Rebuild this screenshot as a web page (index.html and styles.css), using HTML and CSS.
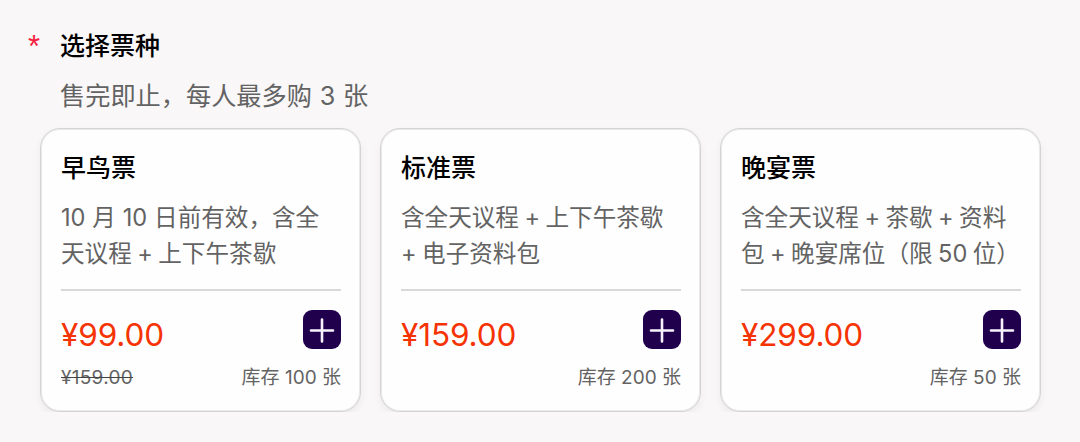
FILE: index.html
```html
<!DOCTYPE html>
<html lang="zh-CN">
<head>
    <meta charset="UTF-8">
    <meta name="viewport" content="width=device-width, initial-scale=1.0">
    <title>选择票种</title>
    <link rel="stylesheet" href="styles.css">
</head>
<body>
    <div class="field">
        <div class="field-title"><span class="required">*</span><h2>选择票种</h2></div>
        <p class="field-tip">售完即止，每人最多购 3 张</p>

        <div class="tickets">
            <div class="ticket">
                <h3>早鸟票</h3>
                <p class="desc"><span class="date">10 月 10 日前有效，含全</span><br>天议程 + 上下午茶歇</p>
                <div class="buy">
                    <span class="price">¥99.00</span>
                    <button class="add" aria-label="+">
                        <svg viewBox="0 0 38 38"><path d="M19 8.5v22M8 19.5h22"/></svg>
                    </button>
                </div>
                <div class="meta">
                    <del>¥159.00</del>
                    <span class="stock">库存 100 张</span>
                </div>
            </div>

            <div class="ticket">
                <h3>标准票</h3>
                <p class="desc">含全天议程 + 上下午茶歇<br>+ 电子资料包</p>
                <div class="buy">
                    <span class="price">¥159.00</span>
                    <button class="add" aria-label="+">
                        <svg viewBox="0 0 38 38"><path d="M19 8.5v22M8 19.5h22"/></svg>
                    </button>
                </div>
                <div class="meta">
                    <span class="stock">库存 200 张</span>
                </div>
            </div>

            <div class="ticket">
                <h3>晚宴票</h3>
                <p class="desc">含全天议程 + 茶歇 + 资料<br>包 + 晚宴席位（限 50 位）</p>
                <div class="buy">
                    <span class="price">¥299.00</span>
                    <button class="add" aria-label="+">
                        <svg viewBox="0 0 38 38"><path d="M19 8.5v22M8 19.5h22"/></svg>
                    </button>
                </div>
                <div class="meta">
                    <span class="stock">库存 50 张</span>
                </div>
            </div>
        </div>
    </div>
</body>
</html>
```
FILE: styles.css
```css
* {
    box-sizing: border-box;
}
body {
    margin: 0;
    background: #f9f7f8;
    color: #000;
    font-family: Inter, 'Noto Sans CJK SC', sans-serif;
}
h2, h3, p {
    margin: 0;
}
.field {
    padding: 28px 39px 0 40px;
}
.field-title {
    display: flex;
    height: 36px;
    line-height: 36px;
    margin-left: -12px;
}
.field-title h2 {
    font-size: 25px;
    font-weight: 500;
}
.required {
    width: 32px;
    color: #f5203c;
    font-family: 'Liberation Sans', sans-serif;
    font-size: 31px;
    line-height: 37px;
}
.field-tip {
    height: 64px;
    padding: 14px 0 0 20px;
    line-height: 36px;
    font-size: 25.2px;
    font-weight: 400;
    word-spacing: 0.7px;
    color: #636363;
}
.tickets {
    display: grid;
    grid-template-columns: repeat(3, 321px);
    gap: 19px;
}
.ticket {
    height: 284px;
    padding: 21px 19px 0 20px;
    background: #fefefe;
    border: 1px solid #d4d4d4;
    border-radius: 20px;
    box-shadow: inset 0 0 0 1px #e9e9e9, 0 4px 8px rgba(0, 0, 0, 0.05);
}
.ticket h3 {
    height: 36px;
    line-height: 37px;
    font-size: 25px;
    font-weight: 500;
}
.desc {
    height: 105px;
    padding-top: 14px;
    border-bottom: 2px solid #d9d9d9;
    line-height: 35.5px;
    font-size: 23.6px;
    font-weight: 400;
    word-spacing: -1.2px;
    color: #636363;
    white-space: nowrap;
}
.date {
    word-spacing: 0.2px;
}
.buy {
    display: flex;
    justify-content: space-between;
    align-items: flex-start;
    height: 66px;
    padding-top: 19px;
}
.price {
    padding-top: 6px;
    line-height: 38px;
    font-size: 31.5px;
    font-weight: 430;
    letter-spacing: -0.1px;
    color: #f53304;
}
.add {
    width: 38px;
    height: 39px;
    padding: 0;
    border: none;
    border-radius: 9px;
    background: #20004c;
}
.add svg {
    display: block;
    width: 38px;
    height: 38px;
    fill: none;
    stroke: #f8f2fc;
    stroke-width: 2.6;
    stroke-linecap: round;
}
.meta {
    display: flex;
    height: 42px;
    line-height: 42px;
    font-size: 19px;
    font-weight: 400;
    color: #636363;
}
.meta del {
    letter-spacing: 0.3px;
    text-decoration-color: #444;
}
.stock {
    margin-left: auto;
}
```
